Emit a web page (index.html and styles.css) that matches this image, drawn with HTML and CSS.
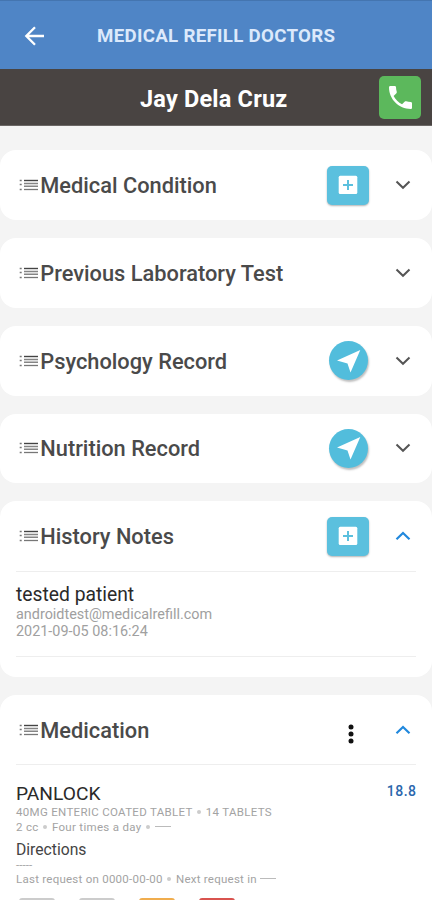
FILE: index.html
```html
<!DOCTYPE html>
<html lang="en">
<head>
<meta charset="utf-8">
<title>Medical Refill Doctors</title>
<link rel="stylesheet" href="styles.css">
</head>
<body>
<svg class="defs" width="0" height="0">
  <symbol id="list" viewBox="0 0 19 12"><path d="M5 1.500h14" stroke="#444" stroke-width="1.400"/><path d="M5 4.500h14M5 7.200h14" stroke="#858585" stroke-width="1.500"/><path d="M5 10.500h14" stroke="#777" stroke-width="1.300"/><path d="M.7 1.500h2M.7 5.500h2M.7 10.500h2" stroke="#777" stroke-width="1.500"/></symbol>
  <symbol id="down" viewBox="0 0 16 10"><path d="M1.500 1.500L8 7.800l6.500-6.300" fill="none" stroke="currentColor" stroke-width="2"/></symbol>
  <symbol id="up" viewBox="0 0 16 10"><path d="M1.500 8.300L8 2l6.500 6.300" fill="none" stroke="currentColor" stroke-width="2.200"/></symbol>
  <symbol id="plus" viewBox="0 0 20 20"><rect x=".7" y=".7" width="18.600" height="18.200" rx="1.500" fill="#fff"/><path d="M10 5v10M5 10h10" stroke="#5bc0de" stroke-width="2"/></symbol>
  <symbol id="send" viewBox="0 0 24 24"><path d="M23.300 1L13.500 23.600 10.500 14.500 0 11.500z" fill="#fff"/></symbol>
</svg>
<header class="bar">
  <svg class="back" viewBox="0 0 20 20"><path d="M19.500 10H1.800M10.500 1.300L1.800 10l8.700 8.700" fill="none" stroke="#fff" stroke-width="2.300"/></svg>
  <h1 class="app">MEDICAL REFILL DOCTORS</h1>
</header>
<div class="patient">
  <h2 class="name">Jay Dela Cruz</h2>
  <span class="call"><svg viewBox="3 3 18 18"><path fill="#fff" d="M6.620 10.790c1.440 2.830 3.760 5.140 6.590 6.590l2.200-2.200c.27-.27.67-.36 1.020-.24 1.120.37 2.330.57 3.570.57.550 0 1 .45 1 1V20c0 .55-.45 1-1 1-9.390 0-17-7.610-17-17 0-.55.450-1 1-1h3.500c.550 0 1 .45 1 1 0 1.250.2 2.450.57 3.570.110.350.030.740-.250 1.020l-2.200 2.200z"/></svg></span>
</div>
<main class="cards">
  <section class="card"><div class="head"><svg class="list"><use href="#list"/></svg><h3 class="title">Medical Condition</h3><span class="square"><svg><use href="#plus"/></svg></span><svg class="chev"><use href="#down"/></svg></div></section>
  <section class="card"><div class="head"><svg class="list"><use href="#list"/></svg><h3 class="title">Previous Laboratory Test</h3><svg class="chev"><use href="#down"/></svg></div></section>
  <section class="card"><div class="head"><svg class="list"><use href="#list"/></svg><h3 class="title">Psychology Record</h3><span class="circle"><svg><use href="#send"/></svg></span><svg class="chev"><use href="#down"/></svg></div></section>
  <section class="card"><div class="head"><svg class="list"><use href="#list"/></svg><h3 class="title">Nutrition Record</h3><span class="circle"><svg><use href="#send"/></svg></span><svg class="chev"><use href="#down"/></svg></div></section>
  <section class="card">
    <div class="head"><svg class="list"><use href="#list"/></svg><h3 class="title">History Notes</h3><span class="square"><svg><use href="#plus"/></svg></span><svg class="chev open"><use href="#up"/></svg></div>
    <div class="note">
      <p class="note-title">tested patient</p>
      <p class="note-meta">androidtest@medicalrefill.com</p>
      <p class="note-meta date">2021-09-05 08:16:24</p>
    </div>
  </section>
  <section class="card last">
    <div class="head"><svg class="list"><use href="#list"/></svg><h3 class="title">Medication</h3><svg class="dots" viewBox="0 0 6 20"><circle cx="3" cy="3" r="2.500"/><circle cx="3" cy="10" r="2.500"/><circle cx="3" cy="17" r="2.500"/></svg><svg class="chev open"><use href="#up"/></svg></div>
    <div class="med">
      <div class="row"><p class="drug">PANLOCK</p><span class="price">18.8</span></div>
      <p class="small dose">40MG ENTERIC COATED TABLET <i class="sep"></i> 14 TABLETS</p>
      <p class="small freq">2 cc <i class="sep"></i> Four times a day <i class="sep"></i> <i class="dash"></i></p>
      <p class="dir">Directions</p>
      <p class="small none">-----</p>
      <p class="small req">Last request on 0000-00-00 <i class="sep"></i> Next request in <i class="dash"></i></p>
      <div class="actions"><span class="act"></span><span class="act"></span><span class="act warn"></span><span class="act danger"></span></div>
    </div>
  </section>
</main>
</body>
</html>
```
FILE: styles.css
```css
* { box-sizing: border-box; }
body { margin: 0; height: 900px; overflow: hidden; background: #f4f4f4; font-family: Roboto, sans-serif; color: #4a4a4a; }
h1, h2, h3, p { margin: 0; white-space: nowrap; }
svg { display: block; flex: none; }
.defs { position: absolute; }
.bar { height: 69px; display: flex; align-items: center; padding: 1px 0 0 24px; background: #4f85c6; border-top: 1px solid #4475b0; }
.back { width: 21px; height: 20px; }
.app { margin-left: 52px; font-size: 18.700px; letter-spacing: .3px; font-weight: 700; color: #dce9fb; }
.patient { height: 57px; background: #494442; display: flex; align-items: center; justify-content: flex-end; padding: 0 11px 0 140px; border-bottom: 1px solid #6b6765; }
.name { flex: 1; font-size: 23.500px; letter-spacing: .2px; font-weight: 700; color: #fff; padding-top: 4px; }
.call { width: 42px; height: 43px; margin-top: 1px; border-radius: 5px; background: #5cb85c; display: flex; align-items: center; justify-content: center; }
.call svg { width: 23px; height: 23px; }
.cards { display: flex; flex-direction: column; gap: 18px; padding-top: 24.300px; }
.card { background: #fff; border-radius: 16px; padding: 0 16px; flex: none; }
.head { height: 69.750px; display: flex; align-items: center; padding: 0 5px 0 2.500px; }
.list { width: 19px; height: 12px; }
.title { margin-left: 2.800px; flex: 1; font-size: 21.800px; font-weight: 500; line-height: 26px; padding-top: 2px; }
.square { width: 42px; height: 39px; border-radius: 5px; background: #5bc0de; display: flex; align-items: center; justify-content: center; box-shadow: 0 1px 2px rgba(0,0,0,.3); margin-right: 26px; }
.square svg { width: 20px; height: 20px; }
.circle { width: 39px; height: 39px; border-radius: 50%; background: #52bddc; display: flex; align-items: center; justify-content: center; box-shadow: 1px 2px 2px rgba(0,0,0,.25); margin-right: 27px; }
.circle svg { width: 24px; height: 24px; }
.chev { width: 16px; height: 10px; color: #555; }
.open { color: #2188dd; }
.dots { width: 6px; height: 20px; fill: #111; margin: 8px 41px 0 0; }
.note { height: 106px; border-top: 1px solid #eee; padding-top: 11px; }
.note::after { content: ""; display: block; height: 1px; background: #eee; margin-top: 16px; }
.note-title { font-size: 19.300px; line-height: 23px; color: #2a2a2a; }
.note-meta { font-size: 14.400px; line-height: 17px; color: #a0a0a0; }
.last .head { height: 69px; }
.med { border-top: 1px solid #eee; padding-top: 17px; }
.row { display: flex; justify-content: space-between; }
.drug { font-size: 19.200px; line-height: 24px; color: #2a2a2a; }
.price { font-size: 14px; line-height: 18px; font-weight: 500; color: #2b67ad; letter-spacing: .5px; margin-right: -.5px; }
.small { font-size: 11.500px; line-height: 14.500px; letter-spacing: .31px; color: #a3a3a3; }
.dose { margin-top: -1px; }
.sep { display: inline-block; width: 4px; height: 4px; margin: 0 1.500px 2px; border-radius: 50%; background: #ccc; }
.dash { display: inline-block; width: 16px; height: 1px; margin-bottom: 4px; background: #bbb; }
.dir { font-size: 15.700px; line-height: 20px; margin-top: 6px; color: #444; }
.none { line-height: 10px; margin-top: 0; letter-spacing: .1px; }
.req { margin-top: 2px; letter-spacing: .25px; }
.actions { display: flex; gap: 24px; padding: 11px 0 0 3px; }
.act { width: 36px; height: 34px; border-radius: 3px; background: #ccc; }
.warn { background: #f0ad4e; }
.danger { background: #d9534f; }
```
